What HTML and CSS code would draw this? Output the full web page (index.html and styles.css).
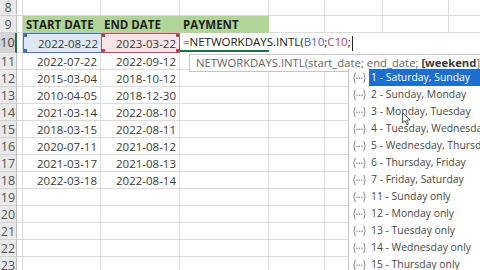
FILE: index.html
```html
<!DOCTYPE html>
<html lang="en">
<head>
    <meta charset="UTF-8">
    <title>NETWORKDAYS.INTL</title>
    <link rel="stylesheet" href="styles.css">
</head>
<body>
    <table class="sheet">
        <colgroup>
            <col class="c-head"><col class="c-a"><col class="c-b"><col class="c-c"><col class="c-d"><col class="c-e"><col class="c-f"><col class="c-g"><col class="c-h">
        </colgroup>
        <tr class="r-8"><th>8</th><td></td><td></td><td></td><td></td><td></td><td></td><td></td><td></td></tr>
        <tr><th>9</th><td></td><td class="hdr">START DATE</td><td class="hdr">END DATE</td><td class="hdr">PAYMENT</td><td></td><td></td><td></td><td></td></tr>
        <tr class="r-10">
            <th class="sel">10</th><td></td>
            <td class="num ref-b">2022-08-22</td>
            <td class="num ref-c">2023-03-22</td>
            <td class="edit" colspan="5">=NETWORKDAYS.INTL(<span class="f-b">B10</span>;<span class="f-c">C10</span>;<span class="caret"></span></td>
        </tr>
        <tr><th>11</th><td></td><td class="num">2022-07-22</td><td class="num">2022-09-12</td><td></td><td></td><td></td><td></td><td></td></tr>
        <tr><th>12</th><td></td><td class="num">2015-03-04</td><td class="num">2018-10-12</td><td></td><td></td><td></td><td></td><td></td></tr>
        <tr><th>13</th><td></td><td class="num">2010-04-05</td><td class="num">2018-12-30</td><td></td><td></td><td></td><td></td><td></td></tr>
        <tr><th>14</th><td></td><td class="num">2021-03-14</td><td class="num">2022-08-10</td><td></td><td></td><td></td><td></td><td></td></tr>
        <tr><th>15</th><td></td><td class="num">2018-03-15</td><td class="num">2022-08-11</td><td></td><td></td><td></td><td></td><td></td></tr>
        <tr><th>16</th><td></td><td class="num">2020-07-11</td><td class="num">2021-08-12</td><td></td><td></td><td></td><td></td><td></td></tr>
        <tr><th>17</th><td></td><td class="num">2021-03-17</td><td class="num">2021-08-13</td><td></td><td></td><td></td><td></td><td></td></tr>
        <tr><th>18</th><td></td><td class="num">2022-03-18</td><td class="num">2022-08-14</td><td></td><td></td><td></td><td></td><td></td></tr>
        <tr><th>19</th><td></td><td></td><td></td><td></td><td></td><td></td><td></td><td></td></tr>
        <tr><th>20</th><td></td><td></td><td></td><td></td><td></td><td></td><td></td><td></td></tr>
        <tr><th>21</th><td></td><td></td><td></td><td></td><td></td><td></td><td></td><td></td></tr>
        <tr><th>22</th><td></td><td></td><td></td><td></td><td></td><td></td><td></td><td></td></tr>
        <tr><th>23</th><td></td><td></td><td></td><td></td><td></td><td></td><td></td><td></td></tr>
    </table>

    <!-- ayuda de la fórmula -->
    <div class="tip">NETWORKDAYS.INTL(start_date; end_date; <b>[weekend</b>]; [holidays])</div>

    <!-- icono de constante, reutilizado en cada opción -->
    <svg width="0" height="0" class="defs">
        <symbol id="ico-const" viewBox="0 0 15 12">
            <path d="M3.2 0.8 Q0.6 6 3.2 11.2 M11.8 0.8 Q14.4 6 11.8 11.2" fill="none" stroke="#8c8c8c" stroke-width="1"/>
            <circle cx="5" cy="6.3" r="0.8" fill="#8c8c8c"/>
            <circle cx="7.5" cy="6.3" r="0.8" fill="#8c8c8c"/>
            <circle cx="10" cy="6.3" r="0.8" fill="#8c8c8c"/>
        </symbol>
    </svg>

    <!-- lista de opciones de fin de semana -->
    <ul class="picker">
        <li class="on"><svg class="ico"><use href="#ico-const"/></svg><span class="lbl">1 - Saturday, Sunday</span></li>
        <li><svg class="ico"><use href="#ico-const"/></svg><span class="lbl">2 - Sunday, Monday</span></li>
        <li><svg class="ico"><use href="#ico-const"/></svg><span class="lbl">3 - Monday, Tuesday</span></li>
        <li><svg class="ico"><use href="#ico-const"/></svg><span class="lbl">4 - Tuesday, Wednesday</span></li>
        <li><svg class="ico"><use href="#ico-const"/></svg><span class="lbl">5 - Wednesday, Thursday</span></li>
        <li><svg class="ico"><use href="#ico-const"/></svg><span class="lbl">6 - Thursday, Friday</span></li>
        <li><svg class="ico"><use href="#ico-const"/></svg><span class="lbl">7 - Friday, Saturday</span></li>
        <li><svg class="ico"><use href="#ico-const"/></svg><span class="lbl">11 - Sunday only</span></li>
        <li><svg class="ico"><use href="#ico-const"/></svg><span class="lbl">12 - Monday only</span></li>
        <li><svg class="ico"><use href="#ico-const"/></svg><span class="lbl">13 - Tuesday only</span></li>
        <li><svg class="ico"><use href="#ico-const"/></svg><span class="lbl">14 - Wednesday only</span></li>
        <li><svg class="ico"><use href="#ico-const"/></svg><span class="lbl">15 - Thursday only</span></li>
        <li><svg class="ico"><use href="#ico-const"/></svg><span class="lbl">16 - Friday only</span></li>
    </ul>

    <svg class="pointer" width="9" height="14" viewBox="0 0 9 14">
        <path d="M0.5 0.5 L0.5 11 L3 8.6 L4.8 12.8 L6.4 12.1 L4.7 8 L8 8 Z" fill="#fff" stroke="#555" stroke-width="1"/>
    </svg>
</body>
</html>
```

FILE: styles.css
```css
html, body { margin: 0; padding: 0; }
body {
    width: 480px;
    height: 270px;
    overflow: hidden;
    position: relative;
    background: #fff;
    font-family: "Open Sans", "Liberation Sans", sans-serif;
    color: #3a3a3a;
}
.defs { position: absolute; }

/* hoja */
.sheet { border-collapse: separate; border-spacing: 0; table-layout: fixed; width: 509px; font-size: 11.5px; line-height: 15px; }
.c-head { width: 17px; }
.c-a { width: 6px; }
.c-b { width: 78px; }
.c-c { width: 79px; }
.c-d { width: 89px; }
.c-e { width: 56px; }
.c-f { width: 58px; }
.c-g { width: 66px; }
.c-h { width: 60px; }

.sheet tr { height: 17px; }
.sheet tr.r-8 { height: 16px; }
.sheet tr.r-10 { height: 20px; }

.sheet td, .sheet th {
    padding: 0 3px;
    border-right: 1px solid #dcdcdc;
    border-bottom: 1px solid #dcdcdc;
    white-space: nowrap;
    overflow: visible;
    box-sizing: border-box;
}
.sheet th {
    padding: 0;
    background: #e9e9e9;
    color: #555;
    font-weight: normal;
    font-size: 12.5px;
    text-align: center;
    border-right-color: #bdbdbd;
    border-bottom-color: #d2d2d2;
}
.sheet th.sel { background: #d4d4d4; color: #444; border-right: 2px solid #217346; }

.num { text-align: right; }
.hdr { background: #b1d598; border-right-color: #b1d598 !important; border-bottom-color: #b1d598 !important; font-weight: bold; color: #1f1f1f; padding-left: 3px; }

.ref-b {
    background:
        linear-gradient(#3f68c2, #3f68c2) left top / 3px 3px no-repeat,
        linear-gradient(#3f68c2, #3f68c2) left bottom / 3px 3px no-repeat,
        #dde7f5;
    border: 1px solid #4a72c4 !important;
    border-right: none !important;
}
.ref-c {
    background:
        linear-gradient(#b8405e, #b8405e) left top / 3px 3px no-repeat,
        linear-gradient(#b8405e, #b8405e) left bottom / 3px 3px no-repeat,
        linear-gradient(#b8405e, #b8405e) right top / 3px 3px no-repeat,
        linear-gradient(#b8405e, #b8405e) right bottom / 3px 3px no-repeat,
        #f8e3e7;
    border: 1px solid #c24a68 !important;
}

/* celda en edición */
.edit {
    background: linear-gradient(#217346, #217346) left bottom / 89px 2px no-repeat, #fff;
    border-right: none !important;
    border-bottom-color: #fff !important;
    color: #222;
    padding-left: 3px !important;
}
.f-b { color: #3d66c6; }
.f-c { color: #c0415f; }
.caret { display: inline-block; width: 1px; height: 15px; background: #222; vertical-align: middle; margin-left: 1px; }

/* tooltip */
.tip {
    position: absolute;
    left: 189px;
    top: 54px;
    width: 320px;
    height: 18px;
    box-sizing: border-box;
    padding: 0 6px;
    line-height: 16px;
    font-size: 11.3px;
    color: #666;
    background: #fff;
    border: 1px solid #c6c6c6;
    white-space: nowrap;
    overflow: hidden;
}
.tip b { color: #3c3c3c; }

/* lista */
.picker {
    position: absolute;
    left: 348px;
    top: 69px;
    width: 170px;
    margin: 0;
    padding: 0;
    list-style: none;
    background: #fff;
    border: 1px solid #c6c6c6;
    border-top-width: 0;
    font-size: 10.4px;
    color: #474747;
}
.picker li { display: flex; height: 17px; align-items: center; white-space: nowrap; }
.picker .ico { width: 15px; height: 12px; margin: 0 2px 0 3px; flex: none; }
.picker .lbl { flex: 1; height: 17px; line-height: 17px; padding-left: 2px; }
.picker li.on .lbl { background: #1c6fd0; color: #fff; }

.pointer { position: absolute; left: 402px; top: 112px; }
```
